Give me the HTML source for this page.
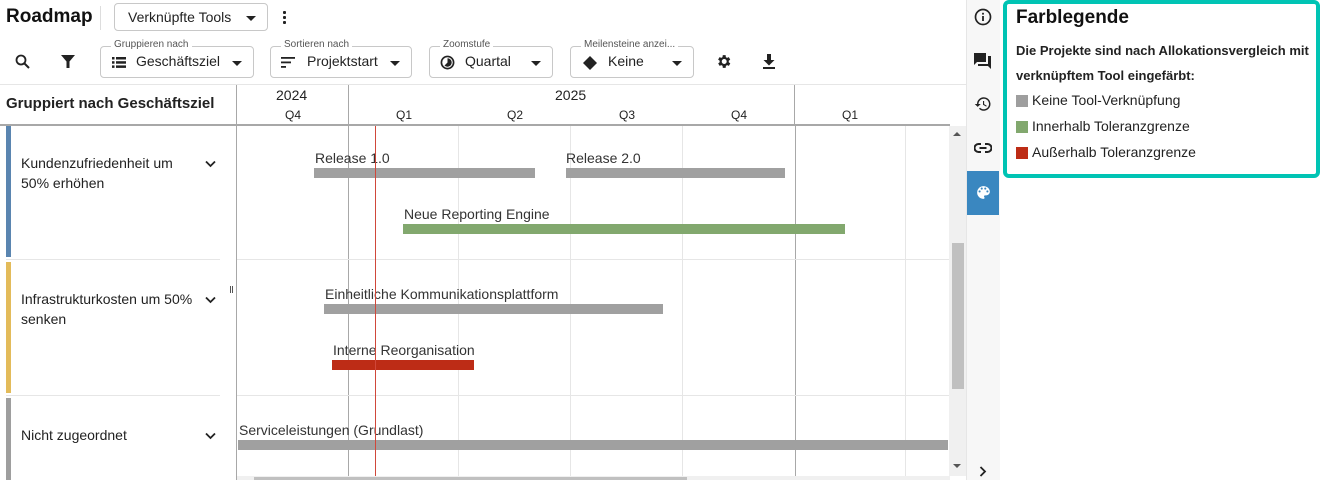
<!DOCTYPE html>
<html><head><meta charset="utf-8"><style>
*{box-sizing:border-box;margin:0;padding:0}
body{width:1321px;height:480px;overflow:hidden;background:#fff;font-family:"Liberation Sans",sans-serif;color:#222;position:relative}
.a{position:absolute}
.btn{position:absolute;border:1px solid #c8c8c8;border-radius:4px;background:#fff}
.lbl{position:absolute;top:-8px;left:10px;background:#fff;padding:0 3px;font-size:10px;color:#555}
.txt{position:absolute;font-size:14px;color:#222;white-space:nowrap}
.caret{position:absolute;width:0;height:0;border-left:5px solid transparent;border-right:5px solid transparent;border-top:5px solid #222}
.bar{position:absolute;height:10px}
.bl{position:absolute;font-size:14px;color:#333;white-space:nowrap}
.vl{position:absolute;width:1px;background:#e6e6e6}
</style></head><body>
<div class="a" style="left:6px;top:6px;font-size:19px;color:#111;font-weight:bold">Roadmap</div>
<div class="a" style="left:100px;top:6px;width:1px;height:24px;background:#ddd"></div>
<div class="btn" style="left:114px;top:3px;width:154px;height:28px"><div class="txt" style="left:13px;top:5px">Verknüpfte Tools</div><div class="caret" style="left:131px;top:12px"></div></div>
<div class="a" style="left:283px;top:10px;width:3px;height:14px;background:radial-gradient(circle,#222 1.5px,transparent 1.6px) 0 0/3px 5px repeat-y"></div>
<svg class="a" style="left:15px;top:54px" width="16" height="16" viewBox="0 0 16 16"><circle cx="6" cy="6" r="4.5" fill="none" stroke="#222" stroke-width="1.8"/><path d="M9.5 9.5L14 14" stroke="#222" stroke-width="2"/></svg>
<svg class="a" style="left:61px;top:55px" width="14" height="14" viewBox="0 0 14 14"><path d="M0 0H14L8.5 6.5V13H5.5V6.5Z" fill="#222"/></svg>
<div class="btn" style="left:100px;top:46px;width:154px;height:32px"><div class="lbl">Gruppieren nach</div>
<svg class="a" style="left:11px;top:10px" width="14" height="11"><rect x="0" y="0" width="2.5" height="2.5" fill="#222"/><rect x="4" y="0" width="10" height="2.5" fill="#222"/><rect x="0" y="4.2" width="2.5" height="2.5" fill="#222"/><rect x="4" y="4.2" width="10" height="2.5" fill="#222"/><rect x="0" y="8.4" width="2.5" height="2.5" fill="#222"/><rect x="4" y="8.4" width="10" height="2.5" fill="#222"/></svg>
<div class="txt" style="left:35px;top:6px">Geschäftsziel</div><div class="caret" style="left:131px;top:14px"></div></div>
<div class="btn" style="left:270px;top:46px;width:142px;height:32px"><div class="lbl">Sortieren nach</div>
<svg class="a" style="left:10px;top:10px" width="14" height="11"><rect y="0" width="14" height="1.8" fill="#222"/><rect y="4.5" width="10" height="1.8" fill="#222"/><rect y="9" width="5" height="1.8" fill="#222"/></svg>
<div class="txt" style="left:36px;top:6px">Projektstart</div><div class="caret" style="left:119px;top:14px"></div></div>
<div class="btn" style="left:429px;top:46px;width:124px;height:32px"><div class="lbl">Zoomstufe</div>
<svg class="a" style="left:10px;top:8px" width="15" height="15" viewBox="0 0 16 16"><circle cx="8" cy="8" r="6.5" fill="none" stroke="#222" stroke-width="1.8"/><path d="M8 3.5A4.5 4.5 0 1 1 4.8 11.2L8 8Z" fill="#222"/></svg>
<div class="txt" style="left:35px;top:6px">Quartal</div><div class="caret" style="left:101px;top:14px"></div></div>
<div class="btn" style="left:570px;top:46px;width:124px;height:32px"><div class="lbl">Meilensteine anzei...</div>
<svg class="a" style="left:11px;top:8px" width="16" height="16"><path d="M8 1L15 8L8 15L1 8Z" fill="#222"/></svg>
<div class="txt" style="left:37px;top:6px">Keine</div><div class="caret" style="left:101px;top:14px"></div></div>
<svg class="a" style="left:715px;top:53px" width="17" height="17" viewBox="0 0 24 24"><path fill="#222" d="M19.4 13a7.8 7.8 0 000-2l2.1-1.6-2-3.5-2.5 1a7.3 7.3 0 00-1.7-1L15 3h-4l-.4 2.9a7.3 7.3 0 00-1.7 1l-2.5-1-2 3.5L6.6 11a7.8 7.8 0 000 2l-2.1 1.6 2 3.5 2.5-1a7.3 7.3 0 001.7 1L11 21h4l.4-2.9a7.3 7.3 0 001.7-1l2.5 1 2-3.5zM13 15.5a3.5 3.5 0 110-7 3.5 3.5 0 010 7z"/></svg>
<svg class="a" style="left:762px;top:54px" width="14" height="15"><path d="M5 0H9V6H12.5L7 11.5L1.5 6H5Z" fill="#222"/><rect x="1" y="13" width="12" height="2" fill="#222"/></svg>
<div class="a" style="left:0;top:84px;width:966px;height:1px;background:#e6e6e6"></div>
<div class="a" style="left:0;top:124px;width:950px;height:2px;background:#a8a8a8"></div>
<div class="a" style="left:6px;top:95px;font-size:15px;font-weight:bold;color:#222">Gruppiert nach Geschäftsziel</div>
<div class="a" style="left:236px;top:85px;width:1px;height:395px;background:#a8a8a8"></div>
<div class="a" style="left:348px;top:85px;width:1px;height:40px;background:#a8a8a8"></div>
<div class="a" style="left:794px;top:85px;width:1px;height:40px;background:#a8a8a8"></div>
<div class="a" style="left:276px;top:87px;font-size:14px">2024</div>
<div class="a" style="left:555px;top:87px;font-size:14px">2025</div>
<div class="a" style="left:285px;top:108px;font-size:12px">Q4</div>
<div class="a" style="left:396px;top:108px;font-size:12px">Q1</div>
<div class="a" style="left:507px;top:108px;font-size:12px">Q2</div>
<div class="a" style="left:619px;top:108px;font-size:12px">Q3</div>
<div class="a" style="left:731px;top:108px;font-size:12px">Q4</div>
<div class="a" style="left:842px;top:108px;font-size:12px">Q1</div>
<div class="a" style="left:6px;top:126px;width:5px;height:131px;background:#5a85b0"></div>
<div class="a" style="left:6px;top:262px;width:5px;height:131px;background:#e3bb5a"></div>
<div class="a" style="left:6px;top:398px;width:5px;height:82px;background:#9e9e9e"></div>
<div class="a" style="left:6px;top:259px;width:214px;height:1px;background:#e6e6e6"></div>
<div class="a" style="left:6px;top:395px;width:214px;height:1px;background:#e6e6e6"></div>
<div class="a" style="left:21px;top:153px;font-size:14px;line-height:20px">Kundenzufriedenheit um<br>50% erhöhen</div>
<div class="a" style="left:21px;top:289px;font-size:14px;line-height:20px">Infrastrukturkosten um 50%<br>senken</div>
<div class="a" style="left:21px;top:425px;font-size:14px;line-height:20px">Nicht zugeordnet</div>
<svg class="a" style="left:205px;top:160px" width="11" height="8"><path d="M1 1.5L5.5 6L10 1.5" fill="none" stroke="#222" stroke-width="1.8"/></svg>
<svg class="a" style="left:205px;top:296px" width="11" height="8"><path d="M1 1.5L5.5 6L10 1.5" fill="none" stroke="#222" stroke-width="1.8"/></svg>
<svg class="a" style="left:205px;top:432px" width="11" height="8"><path d="M1 1.5L5.5 6L10 1.5" fill="none" stroke="#222" stroke-width="1.8"/></svg>
<div class="a" style="left:230px;top:286px;width:1px;height:7px;background:#555"></div><div class="a" style="left:232px;top:286px;width:1px;height:7px;background:#555"></div>
<div class="vl" style="left:458px;top:126px;height:350px"></div>
<div class="vl" style="left:570px;top:126px;height:350px"></div>
<div class="vl" style="left:682px;top:126px;height:350px"></div>
<div class="vl" style="left:905px;top:126px;height:350px"></div>
<div class="a" style="left:348px;top:126px;width:1px;height:350px;background:#a8a8a8"></div>
<div class="a" style="left:795px;top:126px;width:1px;height:350px;background:#a8a8a8"></div>
<div class="a" style="left:237px;top:259px;width:713px;height:1px;background:#e6e6e6"></div>
<div class="a" style="left:237px;top:395px;width:713px;height:1px;background:#e6e6e6"></div>
<div class="bl" style="left:315px;top:150px">Release 1.0</div><div class="bar" style="left:314px;top:168px;width:221px;background:#a0a0a0"></div>
<div class="bl" style="left:566px;top:150px">Release 2.0</div><div class="bar" style="left:566px;top:168px;width:219px;background:#a0a0a0"></div>
<div class="bl" style="left:404px;top:206px">Neue Reporting Engine</div><div class="bar" style="left:403px;top:224px;width:442px;background:#82a86e"></div>
<div class="bl" style="left:325px;top:286px">Einheitliche Kommunikationsplattform</div><div class="bar" style="left:324px;top:304px;width:339px;background:#a0a0a0"></div>
<div class="bl" style="left:333px;top:342px">Interne Reorganisation</div><div class="bar" style="left:332px;top:360px;width:142px;background:#bd2c16"></div>
<div class="bl" style="left:239px;top:422px">Serviceleistungen (Grundlast)</div><div class="bar" style="left:238px;top:440px;width:710px;background:#a0a0a0"></div>
<div class="a" style="left:375px;top:126px;width:1px;height:350px;background:#d0473a"></div>
<div class="a" style="left:949px;top:126px;width:17px;height:350px;background:#f0f0f0"></div>
<div class="a" style="left:952px;top:243px;width:12px;height:146px;background:#c0c0c0"></div>
<div class="a" style="left:953px;top:132px;width:0;height:0;border-left:4px solid transparent;border-right:4px solid transparent;border-bottom:4px solid #555"></div>
<div class="a" style="left:953px;top:464px;width:0;height:0;border-left:4px solid transparent;border-right:4px solid transparent;border-top:4px solid #555"></div>
<div class="a" style="left:237px;top:476px;width:713px;height:4px;background:#f0f0f0"></div>
<div class="a" style="left:254px;top:477px;width:433px;height:3px;background:#c0c0c0"></div>
<div class="a" style="left:966px;top:0;width:34px;height:480px;background:#f7f7f7;border-left:1px solid #e6e6e6"></div>
<svg class="a" style="left:974px;top:8px" width="18" height="18" viewBox="0 0 18 18"><circle cx="9" cy="9" r="7.5" fill="none" stroke="#222" stroke-width="1.7"/><rect x="8.1" y="8" width="1.8" height="5" fill="#222"/><rect x="8.1" y="4.8" width="1.8" height="1.8" fill="#222"/></svg>
<svg class="a" style="left:974px;top:52px" width="18" height="18" viewBox="0 0 18 18"><path d="M0 1H12V10H3L0 13Z" fill="#222"/><path d="M14 4H17V17L14 14H4V12H14Z" fill="#222"/></svg>
<svg class="a" style="left:974px;top:95px" width="18" height="18" viewBox="0 0 24 24"><path fill="#222" d="M13 3a9 9 0 00-9 9H1l3.9 3.9L9 12H6a7 7 0 112.05 4.95l-1.42 1.42A9 9 0 1013 3zm-1 5v5l4.3 2.5.7-1.2-3.5-2.1V8z"/></svg>
<svg class="a" style="left:974px;top:141px" width="18" height="14" viewBox="0 0 18 14"><path d="M7 3H4.5a4 4 0 000 8H7M11 3h2.5a4 4 0 010 8H11M5.5 7h7" fill="none" stroke="#222" stroke-width="2"/></svg>
<div class="a" style="left:967px;top:171px;width:32px;height:44px;background:#3a87c0"></div>
<svg class="a" style="left:975px;top:184px" width="17" height="17" viewBox="0 0 24 24"><path fill="#fff" d="M12 3a9 9 0 000 18 1.5 1.5 0 001.1-2.5 1.5 1.5 0 011.1-2.5H16a5 5 0 005-5c0-4.4-4-8-9-8zM6.5 12a1.5 1.5 0 110-3 1.5 1.5 0 010 3zm3-4a1.5 1.5 0 110-3 1.5 1.5 0 010 3zm5 0a1.5 1.5 0 110-3 1.5 1.5 0 010 3zm3 4a1.5 1.5 0 110-3 1.5 1.5 0 010 3z"/></svg>
<svg class="a" style="left:979px;top:466px" width="8" height="11"><path d="M1.5 1L6 5.5L1.5 10" fill="none" stroke="#222" stroke-width="1.8"/></svg>
<div class="a" style="left:1003px;top:0;width:317px;height:178px;border:4px solid #00c4b4;border-radius:6px"></div>
<div class="a" style="left:1016px;top:7px;font-size:19px;color:#111;font-weight:bold">Farblegende</div>
<div class="a" style="left:1016px;top:38px;font-size:13px;font-weight:bold;line-height:25px;color:#222;width:300px">Die Projekte sind nach Allokationsvergleich mit verknüpftem Tool eingefärbt:</div>
<div class="a" style="left:1016px;top:95px;width:12px;height:12px;background:#9e9e9e"></div><div class="a" style="left:1032px;top:92px;font-size:14px">Keine Tool-Verknüpfung</div>
<div class="a" style="left:1016px;top:121px;width:12px;height:12px;background:#82a86e"></div><div class="a" style="left:1032px;top:118px;font-size:14px">Innerhalb Toleranzgrenze</div>
<div class="a" style="left:1016px;top:147px;width:12px;height:12px;background:#bd2c16"></div><div class="a" style="left:1032px;top:144px;font-size:14px">Außerhalb Toleranzgrenze</div>
</body></html>
